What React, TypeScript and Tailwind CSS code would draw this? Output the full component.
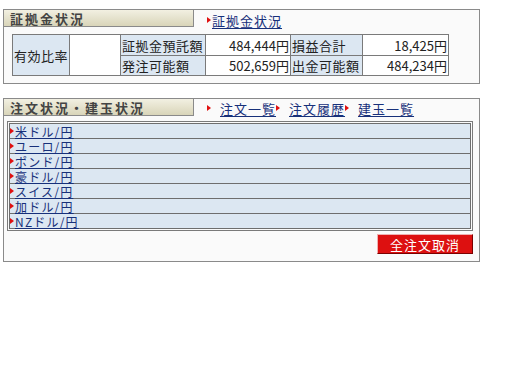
import React from 'react';

const font = { fontFamily: '"Noto Sans CJK JP", "DejaVu Sans", sans-serif' };

const Mark = () => (
  <span className="inline-block w-0 h-0 border-y-[3px] border-y-transparent border-l-[4px] border-l-[#e01010] mr-[1px]" />
);

const LinkItem = ({ label, gap = 'ml-0' }: { label: string; gap?: string }) => (
  <span className="inline-flex items-center">
    <Mark />
    <a href="#" className={`${gap} text-[#17307a] underline underline-offset-2 whitespace-nowrap`}>{label}</a>
  </span>
);

const TitleTab = ({ children }: { children: React.ReactNode }) => (
  <div className="w-[190px] h-[17px] shrink-0 bg-gradient-to-b from-[#f2f0e2] to-[#d9d5b9] border-r border-b border-[#8a8a8a] pl-[6px] flex items-center text-[13px] font-bold tracking-[2px] text-[#444] whitespace-nowrap">
    {children}
  </div>
);

const lbl = 'bg-[#dce7f2] border border-[#7a7a7a] p-0 pl-[1px] text-left whitespace-nowrap overflow-hidden tracking-[0.5px]';
const val = 'bg-white border border-[#7a7a7a] p-0 pr-[1px] text-right whitespace-nowrap overflow-hidden';

const pairs = ['米ドル/円', 'ユーロ/円', 'ポンド/円', '豪ドル/円', 'スイス/円', '加ドル/円', 'NZドル/円'];

export default function App() {
  return (
    <div className="w-[512px] h-[384px] bg-white text-[13px] leading-none text-[#222]" style={font}>
      <div className="h-[9px]" />
      {/* 証拠金状況 */}
      <div className="ml-[3px] w-[477px] h-[75px] border border-[#8a8a8a] bg-[#fafafa]">
        <div className="flex items-center">
          <TitleTab>証拠金状況</TitleTab>
          <div className="ml-[13px] mt-[1px] tracking-[1px]">
            <LinkItem label="証拠金状況" />
          </div>
        </div>
        <table className="ml-[8px] mt-[7px] border-collapse table-fixed w-[436px]">
          <colgroup>
            <col className="w-[57px]" />
            <col className="w-[51px]" />
            <col className="w-[85px]" />
            <col className="w-[85px]" />
            <col className="w-[72px]" />
            <col className="w-[86px]" />
          </colgroup>
          <tbody>
            <tr className="h-[21px]">
              <td rowSpan={2} className={lbl}>有効比率</td>
              <td rowSpan={2} className={val}></td>
              <td className={lbl}>証拠金預託額</td>
              <td className={val}>484,444円</td>
              <td className={lbl}>損益合計</td>
              <td className={val}>18,425円</td>
            </tr>
            <tr className="h-[20px]">
              <td className={lbl}>発注可能額</td>
              <td className={val}>502,659円</td>
              <td className={lbl}>出金可能額</td>
              <td className={val}>484,234円</td>
            </tr>
          </tbody>
        </table>
      </div>

      <div className="h-[14px]" />
      {/* 注文状況・建玉状況 */}
      <div className="ml-[3px] w-[477px] h-[164px] border border-[#8a8a8a] bg-[#fafafa]">
        <div className="flex items-center">
          <TitleTab>注文状況・建玉状況</TitleTab>
          <div className="ml-[13px] mt-[1px] flex items-center tracking-[1px]">
            <LinkItem label="注文一覧" gap="ml-[8px]" />
            <LinkItem label="注文履歴" gap="ml-[8px]" />
            <LinkItem label="建玉一覧" gap="ml-[8px]" />
          </div>
        </div>
        <div className="ml-[3px] mt-[5px] w-[466px] border border-[#7a7a7a] p-[1px]">
          <table className="w-full border-collapse">
            <tbody>
              {pairs.map((p) => (
                <tr key={p}>
                  <td className="bg-[#dce7f2] border border-[#6e6e6e] p-0">
                    <div className="h-[14px] flex items-center">
                      <Mark />
                      <a href="#" className="inline-block h-[13px] text-[#17307a] text-[12px] underline underline-offset-1 tracking-[1.2px] leading-[13px] whitespace-nowrap">{p}</a>
                    </div>
                  </td>
                </tr>
              ))}
            </tbody>
          </table>
        </div>
        <div className="ml-[3px] w-[466px] flex justify-end mt-[3px]">
          <button className="w-[96px] h-[20px] bg-[#dd1010] border border-t-[#f0b0b0] border-l-[#f0b0b0] border-r-[#7a0000] border-b-[#7a0000] text-white text-[13px] tracking-[1px] flex items-center justify-center">
            全注文取消
          </button>
        </div>
      </div>
    </div>
  );
}
